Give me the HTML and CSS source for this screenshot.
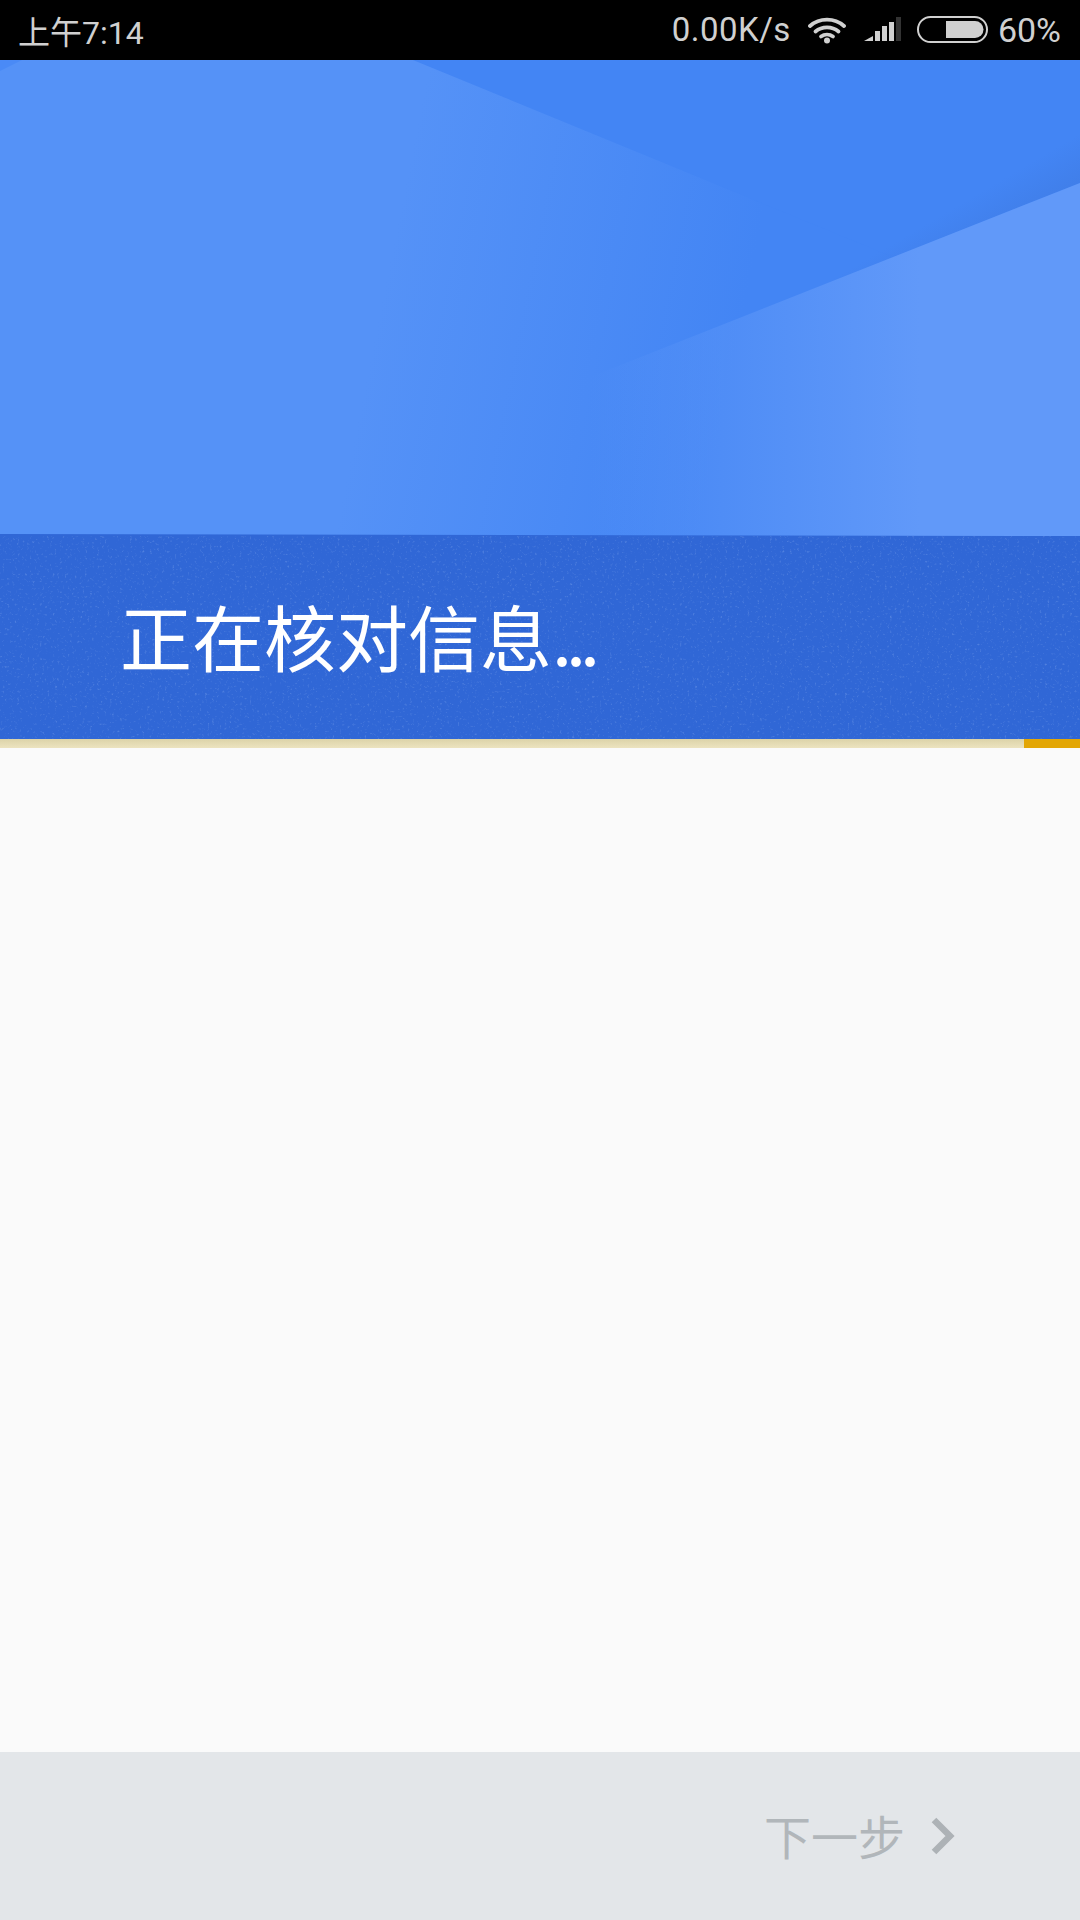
FILE: index.html
```html
<!DOCTYPE html>

<html lang="zh-CN">
  <head>
    <title>正在核对信息</title>
    <meta charset="utf-8" />
    <meta name="viewport" content="width=device-width" />
    <link rel="stylesheet" href="styles.css">
  </head>
  <body>
    <div class="statusBar">
      <span class="clock">上午7:14</span>
      <div class="statusRight">
        <span class="speed">0.00K/s</span>
        <svg class="wifi" width="38" height="28" viewBox="0 0 38 28">
          <path d="M2 10 C11.500 1.500 26.500 1.500 36 10" />
          <path d="M7.500 15.500 C14 10 24 10 30.500 15.500" />
          <path d="M13 20.500 C16.500 18 21.500 18 25 20.500" />
          <circle cx="19" cy="24.500" r="3" />
        </svg>
        <svg class="signal" width="37" height="25" viewBox="0 0 37 25">
          <polygon class="bar" points="0,24 9,24 9,19" />
          <rect class="bar" x="11" y="14" width="5" height="10" />
          <rect class="bar" x="18" y="9" width="5" height="15" />
          <rect class="bar" x="25" y="5" width="5" height="19" />
          <rect class="barOff" x="32" y="0" width="5" height="24" />
        </svg>
        <svg class="battery" width="72" height="27" viewBox="0 0 72 27">
          <rect class="batteryShell" x="1" y="1" width="69" height="25" rx="12.500" />
          <path class="batteryLevel" d="M29 5 H58 A8.500 8.500 0 0 1 58 22 H29 Z" />
        </svg>
        <span class="percent">60%</span>
      </div>
    </div>

    <div class="hero">
      <svg class="heroArt" width="1080" height="476" viewBox="0 0 1080 476">
        <defs>
          <linearGradient id="baseFade" gradientUnits="userSpaceOnUse" x1="370" y1="300" x2="720" y2="370">
            <stop offset="0" stop-color="#5592f7" />
            <stop offset="1" stop-color="#4385f4" />
          </linearGradient>
          <linearGradient id="lightFade" gradientUnits="userSpaceOnUse" x1="590" y1="0" x2="920" y2="0">
            <stop offset="0" stop-color="#6199f9" stop-opacity="0" />
            <stop offset="1" stop-color="#6199f9" />
          </linearGradient>
          <linearGradient id="edgeShade" gradientUnits="userSpaceOnUse" x1="1040" y1="97" x2="1060" y2="131">
            <stop offset="0" stop-color="#3c74d8" stop-opacity="0" />
            <stop offset="1" stop-color="#3c74d8" stop-opacity="0.35" />
          </linearGradient>
        </defs>
        <rect width="1080" height="476" fill="url(#baseFade)" />
        <polygon points="0,0 22,0 0,11" fill="#4a8af6" />
        <polygon points="413,0 1080,0 1080,123 893,197" fill="#4385f4" />
        <polygon points="1080,60 1080,123 800,234 740,150" fill="url(#edgeShade)" />
        <polygon points="1080,123 570,325 510,476 1080,476" fill="url(#lightFade)" />
        <polygon points="0,474 1080,476 0,476" fill="#3067d6" />
      </svg>
    </div>

    <div class="banner">
      <svg class="grain" width="1080" height="203">
        <filter id="speckle">
          <feTurbulence type="fractalNoise" baseFrequency="0.4" numOctaves="2" seed="4" />
          <feColorMatrix values="0 0 0 0 0.6  0 0 0 0 0.75  0 0 0 0 1  0 0 0 2.4 -1.45" />
        </filter>
        <rect width="1080" height="203" filter="url(#speckle)" opacity="0.3" />
      </svg>
      <h1 class="title">正在核对信息<span class="dots">...</span></h1>
    </div>

    <div class="progress">
      <div class="progressFill"></div>
    </div>

    <div class="content"></div>

    <div class="footer">
      <div class="nextBtn">
        <span class="nextLabel">下一步</span>
        <svg width="24" height="38" viewBox="0 0 24 38">
          <polyline points="3,3 19,19 3,35" />
        </svg>
      </div>
    </div>
  </body>
</html>
```

FILE: styles.css
```css
* {
  box-sizing: border-box;
}
body {
  margin: 0;
  width: 1080px;
  height: 1920px;
  display: flex;
  flex-direction: column;
  background-color: #fafafa;
  font-family: Roboto, "Noto Sans CJK SC", sans-serif;
  overflow: hidden;
}

.statusBar {
  height: 60px;
  flex-shrink: 0;
  display: flex;
  align-items: center;
  justify-content: space-between;
  padding: 0 19px 1px 18px;
  background-color: #000;
  color: #d0d0d0;
  font-size: 32px;
}
.statusRight {
  display: flex;
  align-items: center;
}
.speed {
  font-size: 33px;
  letter-spacing: 0.5px;
  margin-right: 17px;
}
.wifi {
  margin-right: 18px;
}
.wifi path {
  fill: none;
  stroke: #d0d0d0;
  stroke-width: 3.8;
  stroke-linecap: round;
}
.wifi circle {
  fill: #d0d0d0;
}
.signal {
  margin-right: 16px;
}
.bar {
  fill: #d0d0d0;
}
.barOff {
  fill: #333;
}
.battery {
  margin-right: 9px;
}
.batteryShell {
  fill: none;
  stroke: #d0d0d0;
  stroke-width: 2;
}
.batteryLevel {
  fill: #d0d0d0;
}
.percent {
  font-size: 34px;
}

.hero {
  height: 476px;
  flex-shrink: 0;
}
.heroArt {
  display: block;
}

.banner {
  position: relative;
  height: 203px;
  flex-shrink: 0;
  display: flex;
  align-items: center;
  padding-left: 120px;
  background-color: #3067d6;
}
.grain {
  position: absolute;
  top: 0;
  left: 0;
}
.title {
  position: relative;
  margin: 0 0 6px;
  color: #fff;
  font-family: "Noto Sans CJK SC", sans-serif;
  font-size: 72px;
  font-weight: 400;
  line-height: 1;
}
.dots {
  letter-spacing: -6px;
}

.progress {
  height: 9px;
  flex-shrink: 0;
  display: flex;
  justify-content: flex-end;
  background: linear-gradient(#dcd3a9, #ece3bf);
}
.progressFill {
  width: 56px;
  background-color: #e3a605;
}

.content {
  flex: 1;
}

.footer {
  height: 168px;
  flex-shrink: 0;
  display: flex;
  align-items: center;
  justify-content: flex-end;
  padding-right: 125px;
  background-color: #e3e6e9;
}
.nextBtn {
  display: flex;
  align-items: center;
  gap: 26px;
  color: #b1b6ba;
  font-family: "Noto Sans CJK SC", sans-serif;
  font-size: 47px;
}
.nextLabel {
  margin-bottom: 4px;
}
.nextBtn svg polyline {
  fill: none;
  stroke: #adb2b6;
  stroke-width: 6.5;
}
```
